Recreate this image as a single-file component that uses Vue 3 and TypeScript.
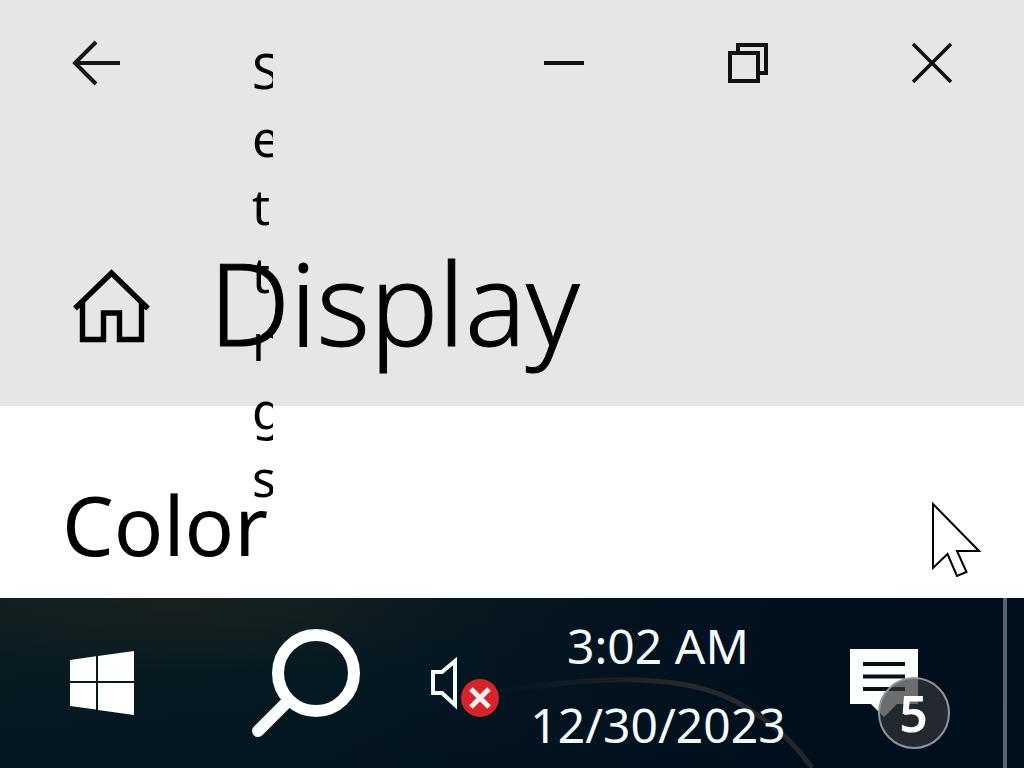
<script setup lang="ts">
const title = 'Settings'
const titleLines: string[] = ['S', 'e', 't', 'ti', 'n', 'g', 's']
const time = '3:02 AM'
const date = '12/30/2023'
const notifications = 5
</script>

<template>
  <div class="screen">
    <main class="window">
      <header class="top">
        <div class="titlebar">
          <button class="back" type="button" aria-label="Back">
            <svg width="48" height="46" viewBox="0 0 48 46">
              <path d="M48 23H4M24 2L3 23L24 44" fill="none" stroke="#171717" stroke-width="4" />
            </svg>
          </button>
          <div class="caption" :aria-label="title">
            <span v-for="(line, i) in titleLines" :key="i">{{ line }}</span>
          </div>
          <div class="controls">
            <button type="button" aria-label="Minimize">
              <svg width="40" height="40" viewBox="0 0 40 40"><path d="M0 20H40" stroke="#111" stroke-width="4" /></svg>
            </button>
            <button type="button" aria-label="Restore">
              <svg width="40" height="40" viewBox="0 0 40 40">
                <path d="M2 10H30V38H2ZM10 10V2H38V30H30" fill="none" stroke="#111" stroke-width="4" />
              </svg>
            </button>
            <button type="button" aria-label="Close">
              <svg width="40" height="40" viewBox="0 0 40 40">
                <path d="M1 1L39 39M39 1L1 39" stroke="#111" stroke-width="3.6" />
              </svg>
            </button>
          </div>
        </div>
        <div class="heading">
          <button class="home" type="button" aria-label="Home">
            <svg width="78" height="74" viewBox="0 0 78 74">
              <path d="M2 39.500L38.500 4L75 39.500M9.500 33V70.500H30.500V44H46.500V70.500H68.500V33" fill="none" stroke="#000" stroke-width="5.4" />
            </svg>
          </button>
          <h1>Display</h1>
        </div>
      </header>
      <section class="content">
        <h2>Color</h2>
        <svg class="pointer" width="50" height="76" viewBox="0 0 50 76">
          <path d="M2 3V67L16.500 53L26 75L35.500 71L26 50H48Z" fill="#fff" stroke="#000" stroke-width="2" />
        </svg>
      </section>
    </main>

    <footer class="taskbar">
      <svg class="wallpaper" viewBox="0 0 1024 170" preserveAspectRatio="none" aria-hidden="true">
        <defs>
          <linearGradient id="glow">
            <stop offset="0" stop-color="#2c2827" stop-opacity="0" />
            <stop offset="0.600" stop-color="#2c2827" />
            <stop offset="1" stop-color="#23262b" />
          </linearGradient>
        </defs>
        <path d="M500 94C600 76 690 76 740 106Q786 132 812 170" fill="none" stroke="url(#glow)" stroke-width="5" />
      </svg>
      <button class="start" type="button" aria-label="Start">
        <svg width="64" height="64" viewBox="0 0 64 64" fill="#fff">
          <path d="M0 9L26 5.300V30H0ZM28 5L64 0V30H28ZM0 32H26V58.500L0 55ZM28 32H64V64L28 59Z" />
        </svg>
      </button>
      <button class="search" type="button" aria-label="Search">
        <svg width="108" height="108" viewBox="0 0 108 108" fill="none" stroke="#fcffff">
          <circle cx="64" cy="44" r="38" stroke-width="12" />
          <path d="M36 72L6 102" stroke-width="12" stroke-linecap="round" />
        </svg>
      </button>
      <div class="tray">
        <button class="volume" type="button" aria-label="Volume muted">
          <svg width="70" height="62" viewBox="0 0 70 62">
            <path d="M3 16H12L25 5V49L12 37H3Z" fill="none" stroke="#f4ffff" stroke-width="4" />
            <circle cx="50" cy="42" r="19" fill="#d8232b" />
            <path d="M41 33L59 51M59 33L41 51" stroke="#fff5ef" stroke-width="5" />
          </svg>
        </button>
        <button class="clock" type="button">
          <span>{{ time }}</span>
          <span>{{ date }}</span>
        </button>
        <button class="action" type="button" aria-label="Notifications">
          <span class="note">
            <svg width="68" height="70" viewBox="0 0 68 70">
              <path d="M0 0H68V55H47L34 68L21 55H0Z" fill="#fff" />
              <path d="M13 15H55M13 27.500H55M13 40H55" stroke="#061019" stroke-width="4" />
            </svg>
            <span class="badge">{{ notifications }}</span>
          </span>
        </button>
        <button class="desktop" type="button" aria-label="Show desktop"></button>
      </div>
    </footer>
  </div>
</template>

<style>
body {
  margin: 0;
}
</style>

<style scoped>
.screen {
  min-height: 100vh;
  display: flex;
  flex-direction: column;
  font-family: "Noto Sans", "Open Sans", sans-serif;
  color: #000;
}
button {
  border: 0;
  padding: 0;
  background: none;
  font: inherit;
  color: inherit;
  display: flex;
  align-items: center;
  justify-content: center;
}
svg {
  display: block;
}
.window {
  flex: 1;
  display: flex;
  flex-direction: column;
  background: #fff;
}
.top {
  background: #e6e6e6;
  padding-bottom: 20px;
}
.titlebar {
  position: relative;
  display: flex;
  justify-content: space-between;
  height: 126px;
}
.back {
  width: 192px;
}
.caption {
  position: absolute;
  z-index: 1;
  left: 252px;
  top: 36px;
  width: 21px;
  overflow: hidden;
  font-size: 50px;
  line-height: 68px;
}
.caption span {
  display: block;
  white-space: nowrap;
}
.controls {
  display: flex;
}
.controls button {
  width: 184px;
}
.heading {
  display: flex;
  align-items: center;
  padding: 100px 0 0 73px;
}
.home {
  margin-right: 58px;
}
h1 {
  margin: 0;
  padding-bottom: 8px;
  font-size: 114px;
  font-weight: 300;
  line-height: 152px;
  -webkit-text-stroke: 1px #000;
}
.content {
  position: relative;
  flex: 1;
  padding: 60px 62px 0;
}
h2 {
  margin: 0;
  font-size: 82px;
  font-weight: 400;
  line-height: 116px;
}
.pointer {
  position: absolute;
  right: 43px;
  top: 95px;
}
.taskbar {
  position: relative;
  display: flex;
  height: 170px;
  background:
    linear-gradient(90deg, transparent 30%, rgba(0, 14, 28, 0.9) 80%),
    radial-gradient(ellipse at 17% 0%, #1a201f, transparent 30%),
    linear-gradient(175deg, #0a1e23, #031521 80%, #001222);
  color: #f3fbff;
}
.wallpaper {
  position: absolute;
  width: 100%;
  height: 100%;
}
.taskbar button {
  position: relative;
}
.start,
.search {
  width: 204px;
}
.tray {
  display: flex;
  margin-left: auto;
}
.volume {
  width: 114px;
}
.taskbar .volume {
  padding-top: 8px;
}
.clock {
  width: 272px;
  flex-direction: column;
  font-size: 48px;
  line-height: 79px;
}
.taskbar .clock {
  padding-top: 4px;
}
.action {
  width: 209px;
}
.taskbar .action {
  align-items: flex-start;
  padding: 51px 0 0 2px;
}
.note {
  position: relative;
  width: 100px;
  height: 100px;
}
.badge {
  position: absolute;
  right: 0;
  bottom: 0;
  box-sizing: border-box;
  width: 72px;
  height: 72px;
  border: 2px solid #8d969e;
  border-radius: 50%;
  background: rgba(48, 51, 54, 0.72);
  color: #fff;
  font-size: 50px;
  font-weight: 600;
  line-height: 68px;
  text-align: center;
}
.desktop {
  width: 21px;
}
.taskbar .desktop {
  border-left: 4px solid #59636e;
}
</style>
